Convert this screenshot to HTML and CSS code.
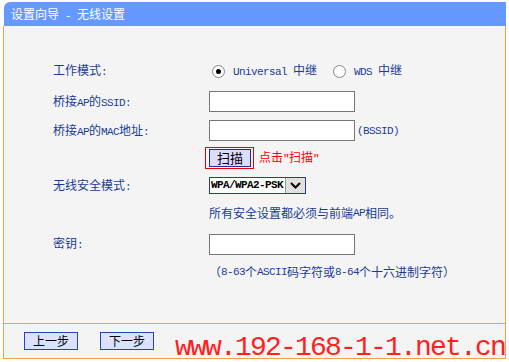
FILE: index.html
```html
<!DOCTYPE html>
<html lang="zh-CN">
<head>
  <meta charset="UTF-8" />
  <title>设置向导 - 无线设置</title>
  <link rel="stylesheet" href="styles.css">
</head>
<body>
  <div class="wizard">
    <div class="title">设置向导<span class="en"> - </span>无线设置</div>

    <div class="panel">
      <div class="form">
        <div class="label">工作模式<span class="en">:</span></div>
        <div class="field">
          <label class="opt"><input type="radio" name="mode" checked><span><span class="en">Universal </span>中继</span></label>
          <label class="opt"><input type="radio" name="mode"><span><span class="en">WDS </span>中继</span></label>
        </div>

        <div class="label">桥接<span class="en">AP</span>的<span class="en">SSID:</span></div>
        <div class="field"><input type="text" class="text"></div>

        <div class="label">桥接<span class="en">AP</span>的<span class="en">MAC</span>地址<span class="en">:</span></div>
        <div class="field"><input type="text" class="text"><span class="en bssid">(BSSID)</span></div>

        <div class="label"></div>
        <div class="field">
          <span class="scan-box"><button class="scan">扫描</button></span>
          <span class="hint-red">点击<span class="en">"</span>扫描<span class="en">"</span></span>
        </div>

        <div class="label">无线安全模式<span class="en">:</span></div>
        <div class="field">
          <div class="select">
            <span class="value en">WPA/WPA2-PSK</span>
            <span class="arrow">
              <svg width="11" height="7" viewBox="0 0 11 7"><polyline points="1,1 5.5,5.5 10,1" fill="none" stroke="#000" stroke-width="2"/></svg>
            </span>
          </div>
        </div>

        <div class="label"></div>
        <div class="field">所有安全设置都必须与前端<span class="en">AP</span>相同。</div>

        <div class="label">密钥<span class="en">:</span></div>
        <div class="field"><input type="password" class="text"></div>

        <div class="label"></div>
        <div class="field">（<span class="en">8-63</span>个<span class="en">ASCII</span>码字符或<span class="en">8-64</span>个十六进制字符）</div>
      </div>
    </div>

    <div class="footer">
      <button class="btn">上一步</button>
      <button class="btn">下一步</button>
    </div>
  </div>

  <div class="watermark">www.192-168-1-1.net.cn</div>
</body>
</html>
```

FILE: styles.css
```css
body {
  margin: 0;
  background: #fff;
  font-family: "Noto Sans CJK SC", sans-serif;
  font-size: 12px;
  line-height: 16px;
  color: #1a3c96;
}
.en {
  font-family: "Liberation Mono", monospace;
  font-size: 11px;
  letter-spacing: -0.6px;
}
.wizard {
  width: 503px;
  margin: 2px 0 0 3px;
}
.title {
  margin-left: 1px;
  height: 24px;
  line-height: 24px;
  padding-left: 7px;
  background: #6699ff;
  color: #fff;
  border-top-left-radius: 6px;
}
.panel {
  height: 297px;
  box-sizing: border-box;
  border-left: 1px solid #f0a04b;
  border-right: 1px solid #f0a04b;
  background: #f4f4f4;
  padding: 30px 0 0 49px;
}
.form {
  display: grid;
  grid-template-columns: 156px 1fr;
  grid-template-rows: 30px 31px 27px 28px 27px 27px 36px 20px;
  align-items: center;
}
.field {
  display: flex;
  align-items: center;
  white-space: nowrap;
}
.opt {
  display: flex;
  align-items: center;
}
.opt + .opt {
  margin-left: 13px;
}
.opt input {
  appearance: none;
  box-sizing: border-box;
  width: 13px;
  height: 13px;
  margin: 0 8px 0 3px;
  border: 1px solid #858585;
  border-radius: 50%;
  background: #fff;
  display: grid;
  place-content: center;
}
.opt input:checked::before {
  content: "";
  width: 5px;
  height: 5px;
  border-radius: 50%;
  background: #000;
}
.text {
  width: 146px;
  height: 21px;
  box-sizing: border-box;
  margin: 0;
  padding: 0 2px;
  border: 1px solid #777;
  background: #fff;
}
.bssid {
  margin-left: 2px;
}
.scan-box {
  display: flex;
  margin-left: -4px;
  padding: 1px 2px 1px 3px;
  border: 1px solid #e00;
}
.scan {
  width: 42px;
  height: 18px;
  box-sizing: border-box;
  padding: 0;
  border: 1px solid #1d2f8a;
  background: #dcdcfc;
  color: #000;
  font-family: "Noto Sans CJK SC", sans-serif;
  font-size: 13px;
  line-height: 16px;
}
.hint-red {
  margin-left: 5px;
  color: #f00;
}
.select {
  display: flex;
  width: 97px;
  height: 17px;
  box-sizing: border-box;
  border: 1px solid #1f3f9f;
  background: #fff;
}
.select .value {
  flex: 1;
  padding-left: 1px;
  line-height: 15px;
  color: #000;
  font-weight: bold;
}
.select .arrow {
  width: 19px;
  display: flex;
  align-items: center;
  justify-content: center;
  background: #e0e0e0;
  border-left: 1px solid #999;
}
.footer {
  display: flex;
  gap: 22px;
  height: 36px;
  box-sizing: border-box;
  padding: 8px 0 0 20px;
  border: 1px solid #f0a04b;
  background: #f4f4f4;
}
.btn {
  width: 54px;
  height: 18px;
  box-sizing: border-box;
  padding: 0;
  border: 1px solid #2347b0;
  background: #dde0ff;
  color: #000;
  font-family: "Noto Sans CJK SC", sans-serif;
  font-size: 12px;
  line-height: 16px;
}
.watermark {
  position: absolute;
  left: 175px;
  top: 334px;
  font-family: "Liberation Mono", monospace;
  font-size: 28px;
  line-height: 28px;
  letter-spacing: -1.8px;
  color: #ff1f1f;
  white-space: nowrap;
}
```
